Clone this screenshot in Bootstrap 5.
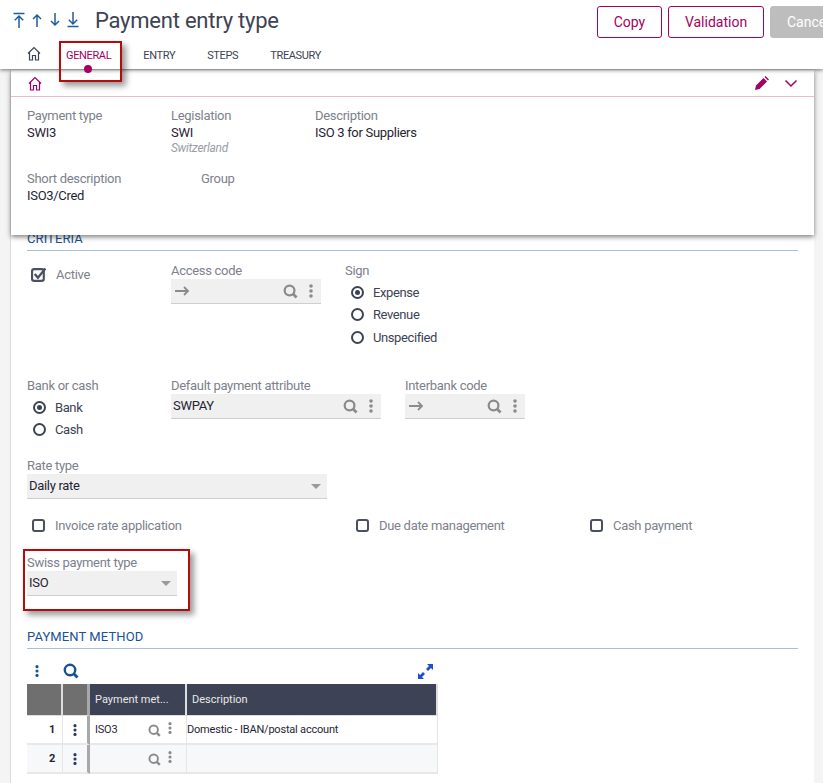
<!DOCTYPE html>
<html lang="en"><head><meta charset="utf-8"><title>Payment entry type</title>
<link href="https://cdn.jsdelivr.net/npm/bootstrap@5.3.0/dist/css/bootstrap.min.css" rel="stylesheet">
<style>
html,body{height:783px;overflow:hidden}
body{background:#f4f4f4;font-family:Roboto,"Liberation Sans",sans-serif;font-size:13px;letter-spacing:-.3px;color:#1f2533;width:823px;position:relative}
.app-head{height:69px;background:#fff;box-shadow:0 1px 4px rgba(0,0,0,.55);position:relative;z-index:3}
.top-row{height:42px;padding-left:13px}
.nav-arrows{gap:6px;width:82px;color:#1f5c9e;margin-bottom:2px}
.page-title{font-size:22px;font-weight:400;color:#3d4354;margin:0;line-height:30px;letter-spacing:-.23px}
.top-btns{position:absolute;left:597px;top:6px;gap:6px;white-space:nowrap}
.act-btn{height:32px;border:1px solid #a5005f;color:#a5005f;background:#fff;border-radius:3px;font-size:14px;padding:0;line-height:30px;text-align:center;letter-spacing:0}
.act-copy{width:65px}.act-val{width:96px}.act-cancel{width:80px;background:#bdbdbd;border-color:#bdbdbd;color:#fff;text-align:left;padding-left:16px}
.tab-row{height:28px;padding-left:27px;font-size:11px;letter-spacing:-.35px;color:#3d4354}
.tab-home{width:39px;margin-top:-6px}
.tab-item{text-transform:uppercase;margin-right:32px;position:relative;line-height:28px}
.tab-on{color:#a5005f}
.tab-on i{position:absolute;left:18px;top:23px;width:8px;height:8px;border-radius:50%;background:#a5005f}
.main-pane{margin-left:10px;width:804px;height:714px;background:#fff;border-left:1px solid #dcdcdc;position:relative}
.sum-card{height:165px;background:#fff;box-shadow:0 2px 5px rgba(0,0,0,.5);position:relative;z-index:2;margin-top:1px}
.sum-bar{height:27px;border-bottom:1px solid #e4bdd3;padding:0 16px 0 17px;color:#a5005f}
.bar-tools{gap:15px}
.sum-rows{padding:11px 16px 0}
.f-lab{color:#7d818c;line-height:16px;display:block}
.f-val{color:#1f2533;line-height:17px;display:block}
.f-sub{color:#9a9da5;font-style:italic;font-size:12px;line-height:15px;display:block}
.sum-line{height:63px}
.w-144{width:144px}.w-174{width:174px}
.pane-body{padding:0 16px;margin-top:-4px}
.sec-head{color:#1a5296;font-size:13px;font-weight:400;letter-spacing:.1px;line-height:15px;height:20px;border-bottom:1px solid #a4c0e0;text-transform:uppercase}
.crit-row{height:127px;padding-top:12px}
.chk-line{gap:9px;color:#7d818c}
.check-col{padding-top:2px}
.fld{height:25px;background:#f0f0f0;border-bottom:1px solid #cfcfcf;padding:0 2px;color:#1f2533;line-height:24px}
.fld .ends{color:#8b8b8b;gap:11px;margin-right:6px}
.arrow-ph{color:#8b8b8b;margin-left:1px}
.caret-ic{width:0;height:0;border-left:5px solid transparent;border-right:5px solid transparent;border-top:5px solid #9a9a9a}
.rad-line{height:22.5px;gap:9px;padding-left:6px;letter-spacing:-.4px;color:#3d4354}
.rad-first{margin-top:2px}
.rad-c{width:13px;height:13px;border:2px solid #3d4354;border-radius:50%;position:relative;flex:none}
.rad-c.on::after{content:"";position:absolute;inset:2px;border-radius:50%;background:#3d4354}
.box-c{width:13px;height:13px;border:2px solid #4a5060;border-radius:3px;flex:none}
.box-first{margin-left:5px}
.x144{width:144px}.w150{width:150px}.w210{width:210px}.w120{width:120px}.w300{width:300px}
.bank-row{height:80px}
.rate-row{height:57px}
.flags-row{height:40px;line-height:21px}
.flags-row .chk-line{gap:10px}
.x-a{width:329px}.x-b{width:234px}
.swiss-row{height:74px}
.tool-row{height:35px;padding:9px 5px 0 8px;color:#1a5296;width:411px}
.expand-ic{margin-left:auto}
.no-shrink{flex:none}
.grid-tb{width:411px;border-collapse:separate;border-spacing:0;table-layout:fixed;font-size:11px;margin:0}
.c-a{width:36px}.c-b{width:27px}.c-c{width:97px}
.grid-tb th{background:#3d4354;color:#e8e8e8;font-weight:400;height:32px;padding:2px 5px 0;border-right:2px solid #dedede;border-bottom:1px solid #dedede;letter-spacing:0;white-space:nowrap}
.grid-tb th.gr{background:#6f6f6f}
.grid-tb th.sep,.grid-tb td.sep{border-right:3px solid #a8a8a8}
.grid-tb td{height:29px;padding:1px 5px 0;border-right:1px solid #e6e6e6;border-bottom:2px solid #e8e8e8;background:#fff;vertical-align:middle;letter-spacing:-.2px}
.grid-tb td.pick{padding-right:14px}
.grid-tb tr.alt td{background:#f7f8f9}
.grid-tb td.num{text-align:right;font-weight:700;font-size:11px;padding-right:7px}
.grid-tb td.desc{padding-left:0}
.pick-tools{color:#8b8b8b;gap:7px}
.pick-tools .up{margin-bottom:5px}
.row-dots{color:#2a3a5c}
.note-box{position:absolute;border:2px solid #b30c0c;box-shadow:4px 4px 6px rgba(0,0,0,.4);z-index:5}
.note-a{left:59px;top:41px;width:63px;height:41px}
.note-b{left:23px;top:549px;width:167px;height:62px}
</style></head>
<body>
<svg width="0" height="0" class="position-absolute">
<symbol id="i-home" viewBox="0 0 14 15"><path d="M1 7.500 7 1.500 13 7.500M2.500 6V14H5.500V9.500H8.500V14H11.500V6" fill="none" stroke="currentColor" stroke-width="1.200"/></symbol>
<symbol id="i-search" viewBox="0 0 16 16"><circle cx="7" cy="7" r="5.200" fill="none" stroke="currentColor" stroke-width="2.400"/><path d="M10.500 10.500 14.500 14.500" stroke="currentColor" stroke-width="3"/></symbol>
<symbol id="i-dots" viewBox="0 0 4 16"><circle cx="2" cy="3" r="1.800" fill="currentColor"/><circle cx="2" cy="8" r="1.800" fill="currentColor"/><circle cx="2" cy="13" r="1.800" fill="currentColor"/></symbol>
<symbol id="i-arrow" viewBox="0 0 16 12"><path d="M1 6H14M10 2 14 6 10 10" fill="none" stroke="currentColor" stroke-width="1.800"/></symbol>
</svg>

<header class="app-head">
  <div class="top-row d-flex align-items-center">
    <div class="nav-arrows d-flex align-items-center">
      <svg width="12" height="16" viewBox="0 0 12 16" fill="none" stroke="currentColor" stroke-width="1.500"><path d="M.5 1.500H11.500M6 16V4M1.800 8.200 6 4 10.200 8.200"/></svg>
      <svg width="12" height="14" viewBox="0 0 12 14" fill="none" stroke="currentColor" stroke-width="1.500"><path d="M6 14V2M2 6 6 2 10 6"/></svg>
      <svg width="12" height="14" viewBox="0 0 12 14" fill="none" stroke="currentColor" stroke-width="1.500"><path d="M6 0V12M2 8 6 12 10 8"/></svg>
      <svg width="12" height="16" viewBox="0 0 12 16" fill="none" stroke="currentColor" stroke-width="1.500"><path d="M.5 14.500H11.500M6 0V12M1.800 7.800 6 12 10.200 7.800"/></svg>
    </div>
    <h1 class="page-title">Payment entry type</h1>
  </div>
  <div class="top-btns d-flex">
    <button class="btn act-btn act-copy">Copy</button>
    <button class="btn act-btn act-val">Validation</button>
    <button class="btn act-btn act-cancel">Cancel</button>
  </div>
  <nav class="tab-row d-flex align-items-center">
    <span class="tab-home"><svg width="14" height="15" class="d-block"><use href="#i-home"/></svg></span>
    <span class="tab-item tab-on">General<i></i></span>
    <span class="tab-item">Entry</span>
    <span class="tab-item">Steps</span>
    <span class="tab-item">Treasury</span>
  </nav>
</header>

<main class="main-pane">
  <section class="sum-card">
    <div class="sum-bar d-flex align-items-center justify-content-between">
      <svg width="14" height="15"><use href="#i-home"/></svg>
      <span class="d-flex align-items-center bar-tools">
        <svg width="15" height="15" viewBox="0 0 15 15" fill="currentColor"><path d="M1 14 2 9.500 9.500 2 13 5.500 5.500 13ZM10.500 1 11.500 0 15 3.500 14 4.500Z"/></svg>
        <svg width="14" height="9" viewBox="0 0 14 9" fill="none" stroke="currentColor" stroke-width="1.500"><path d="M1.500 1.500 7 7 12.500 1.500"/></svg>
      </span>
    </div>
    <div class="sum-rows">
      <div class="sum-line d-flex">
        <div class="w-144"><span class="f-lab">Payment type</span><span class="f-val">SWI3</span></div>
        <div class="w-144"><span class="f-lab">Legislation</span><span class="f-val">SWI</span><span class="f-sub">Switzerland</span></div>
        <div><span class="f-lab">Description</span><span class="f-val">ISO 3 for Suppliers</span></div>
      </div>
      <div class="d-flex">
        <div class="w-174"><span class="f-lab">Short description</span><span class="f-val">ISO3/Cred</span></div>
        <div><span class="f-lab">Group</span></div>
      </div>
    </div>
  </section>

  <div class="pane-body">
    <div class="sec-head">Criteria</div>
    <div class="crit-row d-flex">
      <div class="x144 chk-line d-flex align-items-center align-self-start ps-1 check-col">
        <svg width="16" height="16" viewBox="0 0 15 15" fill="none" class="no-shrink"><rect x="1" y="2" width="11" height="11" rx="2" stroke="#4a5060" stroke-width="2"/><path d="M3.500 6.500 6.500 10 13.500 1.500" stroke="#4a5060" stroke-width="2.200"/></svg>
        <span>Active</span>
      </div>
      <div class="w150 me-4">
        <label class="f-lab">Access code</label>
        <div class="fld d-flex align-items-center justify-content-between">
          <svg width="16" height="12" class="arrow-ph"><use href="#i-arrow"/></svg>
          <span class="ends d-flex align-items-center"><svg width="15" height="15"><use href="#i-search"/></svg><svg width="4" height="16"><use href="#i-dots"/></svg></span>
        </div>
      </div>
      <div>
        <label class="f-lab">Sign</label>
        <div class="rad-line d-flex align-items-center rad-first"><span class="rad-c on"></span>Expense</div>
        <div class="rad-line d-flex align-items-center"><span class="rad-c"></span>Revenue</div>
        <div class="rad-line d-flex align-items-center"><span class="rad-c"></span>Unspecified</div>
      </div>
    </div>

    <div class="bank-row d-flex">
      <div class="x144">
        <label class="f-lab">Bank or cash</label>
        <div class="rad-line d-flex align-items-center rad-first"><span class="rad-c on"></span>Bank</div>
        <div class="rad-line d-flex align-items-center"><span class="rad-c"></span>Cash</div>
      </div>
      <div class="w210 me-4">
        <label class="f-lab">Default payment attribute</label>
        <div class="fld d-flex align-items-center justify-content-between">
          <span>SWPAY</span>
          <span class="ends d-flex align-items-center"><svg width="15" height="15"><use href="#i-search"/></svg><svg width="4" height="16"><use href="#i-dots"/></svg></span>
        </div>
      </div>
      <div class="w120">
        <label class="f-lab">Interbank code</label>
        <div class="fld d-flex align-items-center justify-content-between">
          <svg width="16" height="12" class="arrow-ph"><use href="#i-arrow"/></svg>
          <span class="ends d-flex align-items-center"><svg width="15" height="15"><use href="#i-search"/></svg><svg width="4" height="16"><use href="#i-dots"/></svg></span>
        </div>
      </div>
    </div>

    <div class="rate-row">
      <label class="f-lab">Rate type</label>
      <div class="fld w300 d-flex align-items-center justify-content-between"><span>Daily rate</span><span class="caret-ic me-1"></span></div>
    </div>

    <div class="flags-row d-flex align-items-start">
      <div class="chk-line d-flex align-items-center x-a"><span class="box-c box-first"></span>Invoice rate application</div>
      <div class="chk-line d-flex align-items-center x-b"><span class="box-c"></span>Due date management</div>
      <div class="chk-line d-flex align-items-center"><span class="box-c"></span>Cash payment</div>
    </div>

    <div class="swiss-row">
      <label class="f-lab">Swiss payment type</label>
      <div class="fld w150 d-flex align-items-center justify-content-between"><span>ISO</span><span class="caret-ic me-1"></span></div>
    </div>

    <div class="sec-head">Payment method</div>
    <div class="tool-row d-flex align-items-center">
      <svg width="4" height="14" class="me-4"><use href="#i-dots"/></svg>
      <svg width="16" height="16"><use href="#i-search"/></svg>
      <svg width="15" height="15" viewBox="0 0 15 15" fill="#1e50c8" class="expand-ic"><path d="M9 0H15V6L13 4 10 7 8 5 11 2ZM0 9 2 11 5 8 7 10 4 13 6 15H0Z"/></svg>
    </div>
    <table class="grid-tb">
      <colgroup><col class="c-a"><col class="c-b"><col class="c-c"><col></colgroup>
      <thead><tr><th class="gr"></th><th class="gr sep"></th><th>Payment met...</th><th>Description</th></tr></thead>
      <tbody>
        <tr><td class="num">1</td><td class="sep row-dots"><svg width="4" height="14" class="d-block mx-auto"><use href="#i-dots"/></svg></td>
          <td class="pick"><div class="d-flex align-items-center justify-content-between"><span>ISO3</span><span class="d-flex align-items-center pick-tools"><svg width="13" height="13"><use href="#i-search"/></svg><svg width="4" height="14" class="up"><use href="#i-dots"/></svg></span></div></td>
          <td class="desc">Domestic - IBAN/postal account</td></tr>
        <tr class="alt"><td class="num">2</td><td class="sep row-dots"><svg width="4" height="14" class="d-block mx-auto"><use href="#i-dots"/></svg></td>
          <td class="pick"><div class="d-flex align-items-center justify-content-end"><span class="d-flex align-items-center pick-tools"><svg width="13" height="13"><use href="#i-search"/></svg><svg width="4" height="14" class="up"><use href="#i-dots"/></svg></span></div></td>
          <td></td></tr>
      </tbody>
    </table>
  </div>
</main>
<div class="note-box note-a"></div>
<div class="note-box note-b"></div>
<script src="https://cdn.jsdelivr.net/npm/bootstrap@5.3.0/dist/js/bootstrap.bundle.min.js"></script>
</body></html>
